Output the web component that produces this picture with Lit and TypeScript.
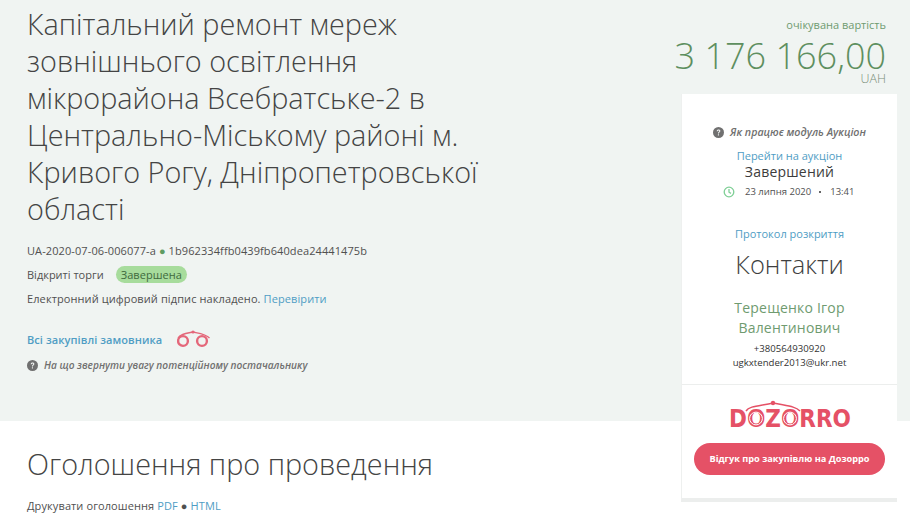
import { LitElement, html, css, svg } from "lit";
import { customElement } from "lit/decorators.js";

const help = html`<svg class="help" viewBox="0 0 16 16" width="11" height="11"><circle cx="8" cy="8" r="8" fill="#707070"/><path d="M5.4 6.1c.1-1.6 1.2-2.4 2.7-2.4 1.5 0 2.6.8 2.6 2.1 0 1.9-2.1 1.9-2.1 3.6H7.2c0-2.2 1.9-2.3 1.9-3.5 0-.5-.4-.9-1-.9-.7 0-1.1.4-1.2 1.1z" fill="#f4f6f5"/><rect x="7.1" y="10.6" width="1.6" height="1.7" fill="#f4f6f5"/></svg>`;

const binoculars = svg`<g fill="none" stroke="#e4677a"><circle cx="6" cy="11" r="4.9" stroke-width="2.4"/><circle cx="25" cy="11" r="4.9" stroke-width="2.4"/><path d="M1 8C3 4 9 3.4 16 2 23 3.4 29 4 32.5 8" stroke-width="1.3"/></g><circle cx="16" cy="2" r="1.6" fill="#e4677a"/>`;

@customElement("app-root")
export class AppRoot extends LitElement {
  static styles = css`
    :host { display: block; width: 910px; height: 514px; overflow: hidden; background: #fff; font-family: "Open Sans", sans-serif; font-size: 11px; color: #444; }
    a { color: #4f9dc4; text-decoration: none; }
    .hero { height: 421px; background: #f0f4f2; box-sizing: border-box; padding: 5px 24px 0 27px; display: flex; justify-content: space-between; }
    .main { width: 470px; }
    h1 { margin: 0; font-weight: 300; font-size: 28.8px; line-height: 37px; color: #444; }
    .id { margin-top: 15px; line-height: 18px; color: #505050; letter-spacing: 0.095px; }
    .dot { color: #5f9c62; }
    .type { display: flex; align-items: center; gap: 12px; margin-top: 5px; height: 18px; color: #505050; }
    .badge { background: #a7dc9c; border-radius: 9px; padding: 0 5px; line-height: 17px; height: 17px; color: #3e6a3c; letter-spacing: 0.05px; }
    .sign { margin-top: 7px; line-height: 18px; color: #505050; letter-spacing: 0.1px; }
    .all { display: flex; align-items: center; gap: 15px; margin-top: 19px; height: 24px; }
    .all a { font-weight: 600; letter-spacing: 0.08px; }
    .hint { display: flex; align-items: center; gap: 6px; margin-top: 6px; line-height: 16px; font-size: 10.15px; font-style: italic; font-weight: 600; color: #707070; }
    .help { flex: none; }
    .side { width: 204px; display: flex; flex-direction: column; align-items: flex-end; }
    .exp { margin-top: 11px; line-height: 18px; color: #6f9b70; }
    .price { font-weight: 300; font-size: 36px; line-height: 36px; margin-top: 4px; color: #5e8f5f; white-space: nowrap; }
    .cur { font-weight: 300; font-size: 12.5px; line-height: 10px; color: #7a8f7a; }
    .card { width: 216px; height: 408px; margin: 10px -11px 0 0; flex: none; box-sizing: border-box; background: #fff; border-bottom: 4px solid #eceeed; border-left: 1px solid #eef0ef; display: flex; flex-direction: column; align-items: center; text-align: center; }
    .how { display: flex; align-items: center; justify-content: center; gap: 6px; margin-top: 30px; line-height: 16px; font-size: 10.7px; font-style: italic; font-weight: 600; color: #707070; }
    .go { margin-top: 7px; line-height: 18px; }
    .state { font-size: 14px; line-height: 18px; color: #3c3c3c; letter-spacing: 0.2px; margin-top: -2px; }
    .date { display: flex; align-items: center; gap: 8px; font-size: 9.5px; line-height: 14px; margin-top: 4px; margin-left: -2px; color: #505050; }
    .date i { width: 2px; height: 2px; background: #666; margin: 0 1px 0 0; }
    .proto { margin-top: 26px; line-height: 18px; }
    .contacts { margin: 4px 0 0; font-weight: 300; font-size: 25.5px; line-height: 34px; color: #3f3f3f; }
    .name { margin-top: 17px; width: 180px; font-size: 14px; line-height: 20px; color: #6f9b70; letter-spacing: 0.2px; }
    .contact { margin-top: 4px; font-size: 9.6px; line-height: 13.5px; color: #333; }
    .dz { margin-top: auto; align-self: stretch; border-top: 1px solid #eceeed; height: 114px; flex: none; display: flex; flex-direction: column; align-items: center; box-sizing: border-box; }
    .logo { margin-top: 15px; display: block; }
    .logo text { font-family: "DejaVu Sans", sans-serif; font-weight: 700; font-size: 24px; fill: #e55166; }
    .btn { margin-top: 13px; width: 191px; height: 32px; border-radius: 16px; background: #e55166; color: #fff; font-size: 9.2px; font-weight: 700; line-height: 32px; text-align: center; }
    .sec { padding: 24px 27px 0; }
    h2 { margin: 0; font-weight: 300; font-size: 28.8px; line-height: 38px; color: #444; }
    .print { margin-top: 14px; line-height: 18px; color: #505050; letter-spacing: 0.1px; }
  `;
  render() {
    return html`
      <section class="hero">
        <div class="main">
          <h1>Капітальний ремонт мереж зовнішнього освітлення мікрорайона Всебратське-2 в Центрально-Міському районі м. Кривого Рогу, Дніпропетровської області</h1>
          <div class="id">UA-2020-07-06-006077-a <span class="dot">●</span> 1b962334ffb0439fb640dea24441475b</div>
          <div class="type"><span>Відкриті торги</span><span class="badge">Завершена</span></div>
          <div class="sign">Електронний цифровий підпис накладено. <a href="#">Перевірити</a></div>
          <div class="all"><a href="#">Всі закупівлі замовника</a><svg width="34" height="19" viewBox="0 0 34 19">${binoculars}</svg></div>
          <div class="hint">${help}<span>На що звернути увагу потенційному постачальнику</span></div>
        </div>
        <aside class="side">
          <div class="exp">очікувана вартість</div>
          <div class="price">3 176 166,00</div>
          <div class="cur">UAH</div>
          <div class="card">
            <div class="how">${help}<span>Як працює модуль Аукціон</span></div>
            <a class="go" href="#">Перейти на аукціон</a>
            <div class="state">Завершений</div>
            <div class="date">
              <svg width="12" height="12" viewBox="0 0 12 12" fill="none" stroke="#7fcf96" stroke-width="1.3"><circle cx="6" cy="6" r="4.8"/><path d="M6 3v3.2l2 1.2"/></svg>
              <span>&nbsp;23 липня 2020</span><i></i><span>13:41</span>
            </div>
            <a class="proto" href="#">Протокол розкриття</a>
            <div class="contacts">Контакти</div>
            <div class="name">Терещенко Ігор Валентинович</div>
            <div class="contact">+380564930920<br />ugkxtender2013@ukr.net</div>
            <div class="dz">
              <svg class="logo" width="190" height="30" viewBox="0 0 190 30">
                <text x="34" y="27" textLength="122" lengthAdjust="spacingAndGlyphs">DOZORRO</text>
                <g fill="none" stroke="#fff" stroke-width="1"><circle cx="61" cy="18.5" r="6.4"/><circle cx="95" cy="18.5" r="6.4"/></g>
                <g fill="none" stroke="#e55166" stroke-width="1.5"><path d="M51 11C54 6 64 6 78 3 92 6 100 6 105 11"/></g>
                <circle cx="78" cy="3" r="2.2" fill="#e55166"/>
              </svg>
              <div class="btn">Відгук про закупівлю на Дозорро</div>
            </div>
          </div>
        </aside>
      </section>
      <section class="sec">
        <h2>Оголошення про проведення</h2>
        <div class="print">Друкувати оголошення <a href="#">PDF</a> <span>●</span> <a href="#">HTML</a></div>
      </section>
    `;
  }
}
